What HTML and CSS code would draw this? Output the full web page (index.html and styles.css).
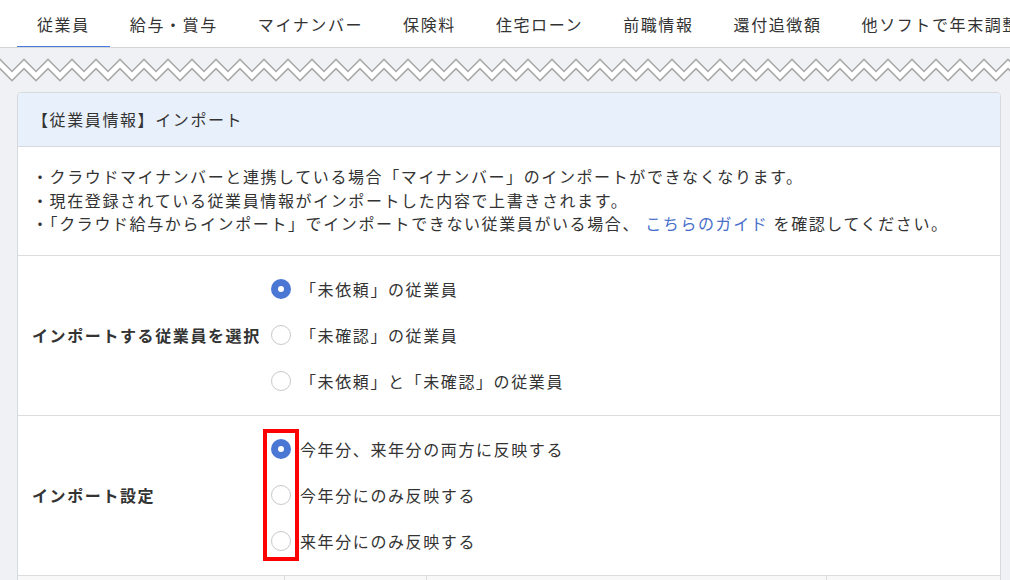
FILE: index.html
```html
<!DOCTYPE html>
<html>
    <head>
        <meta charset="utf-8">
        <link rel="stylesheet" href="styles.css">
    </head>

    <body>
        <nav class="tabs">
            <a class="tab active">従業員</a>
            <a class="tab">給与・賞与</a>
            <a class="tab">マイナンバー</a>
            <a class="tab">保険料</a>
            <a class="tab">住宅ローン</a>
            <a class="tab">前職情報</a>
            <a class="tab">還付追徴額</a>
            <a class="tab">他ソフトで年末調整</a>
        </nav>

        <div class="zigzag">
            <svg width="100%" height="24">
                <defs>
                    <pattern id="zz" width="24" height="24" patternUnits="userSpaceOnUse">
                        <path d="M-12,18 L0,6 L12,18 L24,6 L36,18" fill="none" stroke="#a9a9a9" stroke-width="8"/>
                        <path d="M-12,18 L0,6 L12,18 L24,6 L36,18" fill="none" stroke="#ffffff" stroke-width="5"/>
                    </pattern>
                </defs>
                <rect width="100%" height="24" fill="url(#zz)"/>
            </svg>
        </div>

        <div class="card">
            <div class="card-header">【従業員情報】インポート</div>

            <div class="notes">
                <p>・クラウドマイナンバーと連携している場合「マイナンバー」のインポートができなくなります。</p>
                <p>・現在登録されている従業員情報がインポートした内容で上書きされます。</p>
                <p>・「クラウド給与からインポート」でインポートできない従業員がいる場合、 <a class="link">こちらのガイド</a> を確認してください。</p>
            </div>

            <div class="form-row">
                <div class="form-label">インポートする従業員を選択</div>
                <div class="form-options">
                    <label class="option"><input type="radio" name="target" checked><span>「未依頼」の従業員</span></label>
                    <label class="option"><input type="radio" name="target"><span>「未確認」の従業員</span></label>
                    <label class="option"><input type="radio" name="target"><span>「未依頼」と「未確認」の従業員</span></label>
                </div>
            </div>

            <div class="form-row">
                <div class="form-label">インポート設定</div>
                <div class="form-options">
                    <label class="option"><input type="radio" name="setting" checked><span>今年分、来年分の両方に反映する</span></label>
                    <label class="option"><input type="radio" name="setting"><span>今年分にのみ反映する</span></label>
                    <label class="option"><input type="radio" name="setting"><span>来年分にのみ反映する</span></label>
                    <div class="highlight"></div>
                </div>
            </div>

            <div class="table-row">
                <div class="cell"></div>
                <div class="cell"></div>
                <div class="cell"></div>
                <div class="cell"></div>
            </div>
        </div>
    </body>
</html>
```

FILE: styles.css
```css
body {
    font-family: "Noto Sans CJK JP", "Noto Sans", sans-serif;
    font-size: 16px;
    letter-spacing: 0.1em;
    color: #333;
    background-color: #eff1f5;
    margin: 0;
    padding: 0;
}

.tabs {
    display: flex;
    height: 47px;
    padding-left: 17px;
    background-color: #ffffff;
    border-bottom: 1px solid #d3d5d9;
    white-space: nowrap;
    overflow: hidden;
}

.tab {
    display: block;
    padding: 12px 20px 10px;
    line-height: 24px;
    border-bottom: 2px solid transparent;
    margin-bottom: -1px;
    color: #333;
}

.tab.active {
    border-bottom-color: #4a7ae0;
}

.zigzag {
    padding: 10px 0;
    height: 24px;
}

.zigzag svg {
    display: block;
}

.card {
    margin: 0 9px 0 17px;
    background-color: #ffffff;
    border: 1px solid #d6d9de;
    border-radius: 4px;
    overflow: hidden;
}

.card-header {
    background-color: #e8f0fb;
    padding: 14px 14px 15px;
    line-height: 24px;
    border-bottom: 1px solid #d6d9de;
}

.notes {
    padding: 18px 14px 19px;
    line-height: 23.5px;
    border-bottom: 1px solid #dcdcdc;
}

.notes p {
    margin: 0;
}

.link {
    color: #4a6fcb;
}

.form-row {
    display: flex;
    border-bottom: 1px solid #dcdcdc;
}

.form-label {
    width: 253px;
    box-sizing: border-box;
    padding-left: 14px;
    display: flex;
    align-items: center;
    font-weight: bold;
    white-space: nowrap;
}

.form-options {
    position: relative;
    display: flex;
    flex-direction: column;
    padding: 10px 0 11px;
}

.option {
    display: flex;
    align-items: center;
    padding: 11px 0;
    line-height: 24px;
}

.option input {
    appearance: none;
    -webkit-appearance: none;
    width: 20px;
    height: 20px;
    margin: 0 9px 0 0;
    border: 1px solid #c9c9c9;
    border-radius: 50%;
    background-color: #ffffff;
    box-sizing: border-box;
}

.option input:checked {
    border: 7px solid #4a77d4;
}

.highlight {
    position: absolute;
    left: -8px;
    top: 13px;
    width: 36px;
    height: 132px;
    box-sizing: border-box;
    border: 4px solid #ff0000;
}

.table-row {
    display: grid;
    grid-template-columns: 266px 142px 400px 1fr;
    background-color: #f8f8f8;
    height: 30px;
}

.cell + .cell {
    border-left: 1px solid #dcdcdc;
}
```
